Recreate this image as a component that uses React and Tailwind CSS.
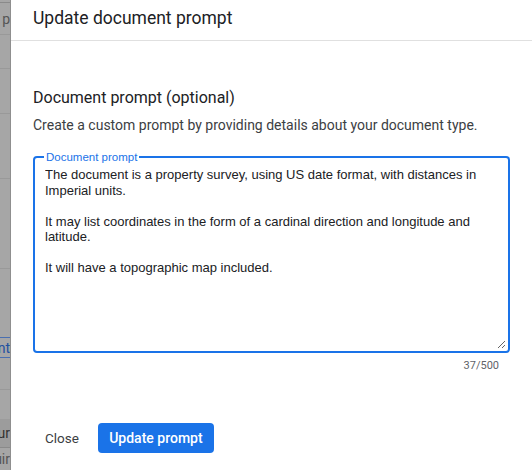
import React from "react";

const TEXT = `The document is a property survey, using US date format, with distances in Imperial units.

It may list coordinates in the form of a cardinal direction and longitude and latitude.

It will have a topographic map included.`;

const ROWS = [
  { h: "h-[3px]", cls: "border-b border-[#8a8a8a]", text: "" },
  { h: "h-[32px]", cls: "border-b border-[#999]", text: ", p", tc: "text-[#555]" },
  { h: "h-[34px]", cls: "border-b border-[#999]", text: "" },
  { h: "h-[45px]", cls: "border-b border-[#999]", text: "" },
  { h: "h-[65px]", cls: "border-b border-[#999]", text: "" },
  { h: "h-[90px]", cls: "border-b border-[#999]", text: "" },
  { h: "h-[69px]", cls: "border-b border-[#4a6fb0]", text: "" },
  { h: "h-[20px]", cls: "border-b border-[#4a6fb0]", text: "nt", tc: "text-[#1f4fa0]" },
  { h: "h-[32px]", cls: "border-b border-[#999]", text: "" },
  { h: "h-[29px]", cls: "", text: "" },
  { h: "h-[29px]", cls: "border-b border-[#8a8a8a] bg-[#9c9c9c]", text: "ur", tc: "text-[#333]" },
  { h: "h-[22px]", cls: "", text: "uir", tc: "text-[#555]" },
];

function Backdrop() {
  return (
    <div className="w-[11px] shrink-0 bg-[#a6a6a6] border-r border-[#8f8f8f] overflow-hidden flex flex-col font-['Roboto',sans-serif]">
      {ROWS.map((r, i) => (
        <div key={i} className={`${r.h} ${r.cls} shrink-0 flex items-center justify-end overflow-hidden`}>
          {r.text && (
            <span className={`text-[14px] leading-[16px] whitespace-nowrap ${r.tc}`}>{r.text}</span>
          )}
        </div>
      ))}
    </div>
  );
}

export default function App() {
  return (
    <div className="w-[532px] h-[470px] flex overflow-hidden bg-white">
      <Backdrop />
      <div className="flex-1 flex flex-col bg-white font-['Roboto',sans-serif]">
        <div className="h-[41px] shrink-0 border-b border-[#e0e0e0] pl-[22px] pt-[7px]">
          <h1 className="text-[17.5px] leading-[22px] text-[#202124]">Update document prompt</h1>
        </div>
        <div className="px-[22px] pt-[47px] flex flex-col">
          <h2 className="text-[16px] leading-[20px] text-[#202124]">Document prompt (optional)</h2>
          <p className="mt-[9px] text-[14px] leading-[16px] text-[#3c4043]">
            Create a custom prompt by providing details about your document type.
          </p>
          <fieldset className="mt-[18px] border-2 border-[#1a73e8] rounded-[4px] pl-[10px] pr-[2px] pb-[2px] min-w-0">
            <legend className="px-[2px] ml-[-1px] text-[11.5px] leading-[12px] text-[#1a73e8] font-['Liberation_Sans',Arial,sans-serif]">
              Document prompt
            </legend>
            <textarea
              className="block h-[186px] w-full resize-y outline-none bg-transparent pt-[4px] text-[13px] leading-[15.5px] text-[#202124] font-['Liberation_Sans',Arial,sans-serif]"
              defaultValue={TEXT}
            />
          </fieldset>
          <div className="mt-[6px] pr-[11px] text-right text-[11px] leading-[14px] text-[#5f6368]">37/500</div>
        </div>
        <div className="mt-auto mb-[17px] pl-[22px] flex items-center gap-[7px]">
          <button className="h-[30px] px-[12px] text-[13.5px] text-[#3c4043]">Close</button>
          <button className="h-[30px] w-[116px] rounded-[4px] bg-[#1a73e8] text-white text-[14px] font-medium">
            Update prompt
          </button>
        </div>
      </div>
    </div>
  );
}
